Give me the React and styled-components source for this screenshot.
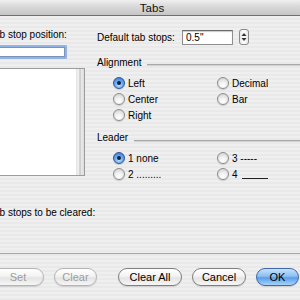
import React from "react";
import styled, { createGlobalStyle } from "styled-components";

const Global = createGlobalStyle`
  html, body { margin: 0; padding: 0; }
  body { font-family: "Liberation Sans", Arial, sans-serif; }
`;

const Window = styled.div`
  width: 300px;
  height: 300px;
  overflow: hidden;
  background: repeating-linear-gradient(to bottom, #efefef 0 2px, #e9e9e9 2px 4px);
  color: #000;
  font-size: 10px;
`;

const TitleBar = styled.div`
  height: 15px;
  border-bottom: 1px solid #6f6f6f;
  background: linear-gradient(to bottom, #f0f0f0, #dadada 40%, #c6c6c6);
  display: flex;
  align-items: center;
  justify-content: center;
  font-size: 11.5px;
  padding-left: 4px;
  color: #111;
`;

const Body = styled.div`
  margin-left: -11px;
  display: flex;
  flex-direction: column;
`;

const Main = styled.div`
  display: flex;
`;

const LeftCol = styled.div`
  width: 96px;
  padding-top: 13px;
  display: flex;
  flex-direction: column;
`;

const RightCol = styled.div`
  flex: 1;
  margin-left: 12px;
  padding-top: 14px;
  display: flex;
  flex-direction: column;
`;

const Label = styled.div`
  line-height: 12px;
  height: 12px;
  white-space: nowrap;
  margin-top: ${({ $mt }) => $mt || 0}px;
`;

const FocusField = styled.div`
  margin-top: 4px;
  width: 74px;
  height: 10px;
  background: #fff;
  border: 2px solid #8fb4e5;
  border-radius: 1px;
  box-shadow: inset 0 0 0 1px #7d93b3;
`;

const ListBox = styled.div`
  margin-top: 9px;
  height: 106px;
  border: 1px solid #9c9c9c;
  display: flex;
  background: #fff;
`;

const ListArea = styled.div`
  flex: 1;
  background: #fff;
`;

const Track = styled.div`
  width: 8px;
  background: linear-gradient(to right, #e4e4e4, #f2f2f2 35%, #bdbdbd 50%, #e9e9e9 65%, #dcdcdc);
`;

const TabRow = styled.div`
  display: flex;
  align-items: center;
  height: 15px;
`;

const RowLabel = styled.div`
  width: 85px;
  white-space: nowrap;
`;

const SmallField = styled.div`
  width: 46px;
  height: 13px;
  background: #fff;
  border: 1px solid #8e8e8e;
  border-top-color: #6b6b6b;
  box-shadow: inset 0 1px 1px #c8c8c8;
  font-size: 10px;
  line-height: 13px;
  padding-left: 3px;
`;

const Stepper = styled.div`
  margin-left: 6px;
  width: 8px;
  height: 14px;
  margin-top: -1px;
  border: 1px solid #8a8a8a;
  border-radius: 3px;
  background: linear-gradient(to right, #e9e9e9, #fff 50%, #e6e6e6);
  display: flex;
  align-items: center;
  justify-content: center;
`;

const Heading = styled.div`
  display: flex;
  align-items: center;
  margin-top: ${({ $mt }) => $mt}px;
  height: 12px;
  line-height: 12px;
  white-space: nowrap;
`;

const HeadLine = styled.div`
  flex: 1;
  margin-left: 6px;
  margin-top: ${({ $off }) => $off}px;
  height: 1px;
  background: #a8a8a8;
  border-bottom: 1px solid #d2d2d2;
`;

const RadioGrid = styled.div`
  margin-top: 6px;
  padding-left: 16px;
  display: grid;
  grid-template-columns: 104px auto;
  grid-auto-rows: 16px;
`;

const Option = styled.div`
  display: flex;
  align-items: center;
  white-space: nowrap;
`;

const Radio = styled.span`
  box-sizing: border-box;
  width: 12px;
  height: 12px;
  border-radius: 50%;
  margin-right: 3px;
  display: inline-flex;
  align-items: center;
  justify-content: center;
  border: 1px solid ${({ $on }) => ($on ? "#2f5597" : "#8c8c8c")};
  background: ${({ $on }) =>
    $on
      ? "radial-gradient(circle at 50% 70%, #bfe3ff 0, #6aaaf0 45%, #2c6bd0 100%)"
      : "radial-gradient(circle at 50% 75%, #ffffff 0, #f1f1f1 40%, #c9c9c9 100%)"};
  box-shadow: 0 1px 1px rgba(0, 0, 0, 0.15);
`;

const Dot = styled.span`
  width: 4px;
  height: 4px;
  border-radius: 50%;
  background: #10203a;
`;

const Rule = styled.span`
  display: inline-block;
  width: 26px;
  height: 1px;
  background: #222;
  margin-left: 4px;
  margin-top: 8px;
`;

const Separator = styled.div`
  margin-top: 34px;
  height: 1px;
  background: #a6a6a6;
`;

const ButtonRow = styled.div`
  margin-top: 14px;
  display: flex;
  align-items: center;
  padding-left: 3px;
`;

const Button = styled.div`
  box-sizing: border-box;
  flex: none;
  width: ${({ $w }) => $w}px;
  margin-left: ${({ $ml }) => $ml || 0}px;
  height: 18px;
  border-radius: 9px;
  display: flex;
  align-items: center;
  justify-content: center;
  font-size: 11px;
  color: ${({ $disabled }) => ($disabled ? "#9d9d9d" : "#000")};
  border: 1px solid ${({ $disabled }) => ($disabled ? "#b4b4b4" : "#7f7f7f")};
  background: linear-gradient(to bottom, #ffffff, #f3f3f3 45%, #e4e4e4 55%, #f6f6f6);
  box-shadow: 0 1px 1px rgba(0, 0, 0, 0.12);
`;

const DefaultButton = styled(Button)`
  border-color: #3f68a7;
  background: linear-gradient(to bottom, #c6e0fb, #8cc0f3 45%, #5b9de8 55%, #a6d4fb);
`;

const RadioOption = ({ on, children }) => (
  <Option>
    <Radio $on={on}>{on && <Dot />}</Radio>
    {children}
  </Option>
);

const StepArrows = () => (
  <svg width="6" height="10" viewBox="0 0 6 10">
    <path d="M3 1 L5.5 4 L0.5 4 Z" fill="#333" />
    <path d="M3 9 L5.5 6 L0.5 6 Z" fill="#333" />
  </svg>
);

export default function App() {
  return (
    <>
      <Global />
      <Window>
        <TitleBar>Tabs</TitleBar>
        <Body>
          <Main>
            <LeftCol>
              <Label>Tab stop position:</Label>
              <FocusField />
              <ListBox>
                <ListArea />
                <Track />
              </ListBox>
              <Label $mt={31}>Tab stops to be cleared:</Label>
            </LeftCol>
            <RightCol>
              <TabRow>
                <RowLabel>Default tab stops:</RowLabel>
                <SmallField>0.5"</SmallField>
                <Stepper>
                  <StepArrows />
                </Stepper>
              </TabRow>
              <Heading $mt={12}>
                Alignment
                <HeadLine $off={3} />
              </Heading>
              <RadioGrid>
                <RadioOption on>Left</RadioOption>
                <RadioOption>Decimal</RadioOption>
                <RadioOption>Center</RadioOption>
                <RadioOption>Bar</RadioOption>
                <RadioOption>Right</RadioOption>
              </RadioGrid>
              <Heading $mt={9}>
                Leader
                <HeadLine $off={5} />
              </Heading>
              <RadioGrid>
                <RadioOption on>1 none</RadioOption>
                <RadioOption>3 -----</RadioOption>
                <RadioOption>2 .........</RadioOption>
                <RadioOption>
                  4<Rule />
                </RadioOption>
              </RadioGrid>
            </RightCol>
          </Main>
          <Separator />
          <ButtonRow>
            <Button $w={52} $disabled>Set</Button>
            <Button $w={43} $ml={10} $disabled>Clear</Button>
            <Button $w={64} $ml={21}>Clear All</Button>
            <Button $w={54} $ml={10}>Cancel</Button>
            <DefaultButton $w={43} $ml={10}>OK</DefaultButton>
          </ButtonRow>
        </Body>
      </Window>
    </>
  );
}
